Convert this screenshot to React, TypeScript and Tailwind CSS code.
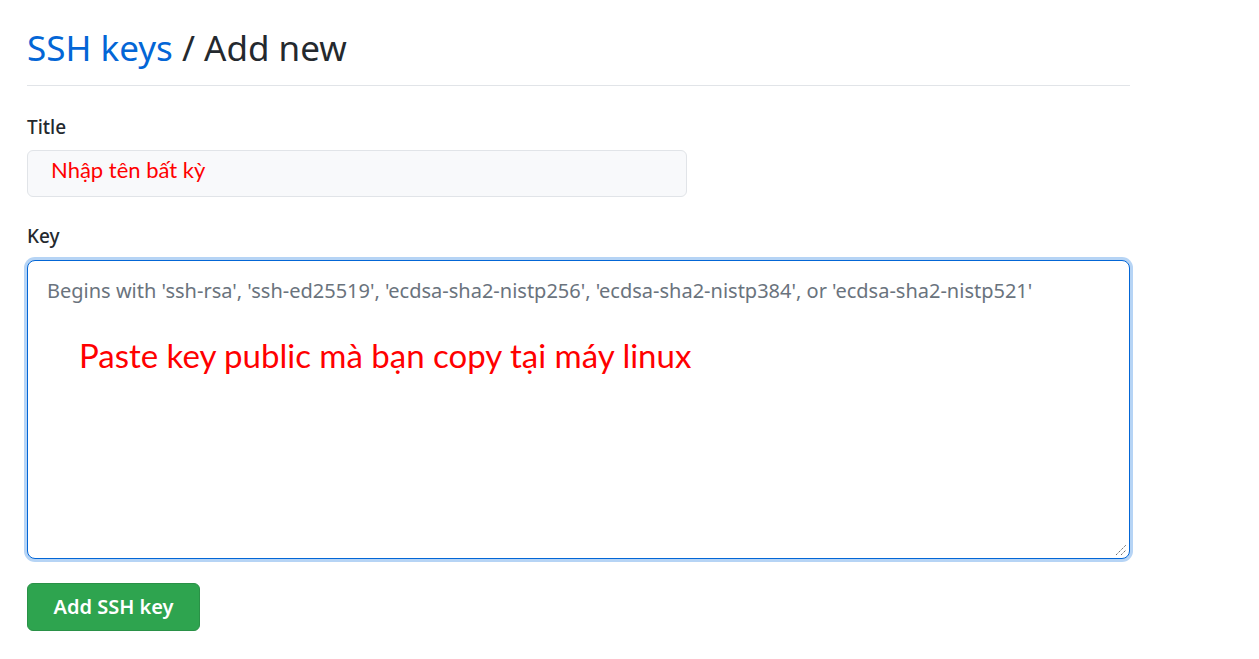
import React from "react";

const App = () => {
  return (
    <div
      className="min-h-screen bg-white pl-[27px] pt-[25px]"
      style={{ fontFamily: '"Noto Sans", "Open Sans", sans-serif' }}
    >
      <div className="w-[1103px]">
        <h2 className="border-b border-[#e1e4e8] pb-[14px] text-[35px] font-normal leading-[46px] text-[#24292e]">
          <a href="#" className="text-[#0366d6]">
            SSH keys
          </a>{" "}
          / Add new
        </h2>

        <form className="mt-[27px]">
          <label className="block text-[19px] font-medium leading-[28px] text-[#24292e]">
            Title
          </label>
          <div className="mt-[9px] flex h-[47px] w-[660px] items-start rounded-[6px] border border-[#e1e4e8] bg-[#f8f9fb] pl-[23px] pt-[5px]">
            <span
              className="text-[22px] leading-[28px] text-[#ff0000]"
              style={{ fontFamily: '"Lato", "Open Sans", sans-serif' }}
            >
              Nhập tên bất kỳ
            </span>
          </div>

          <label className="mt-[25px] block text-[19px] font-medium leading-[28px] text-[#24292e]">
            Key
          </label>
          <div className="relative mt-[10px] h-[299px] w-[1103px] rounded-[8px] border border-[#0366d6] bg-white shadow-[0_0_0_3px_#b6d4f5]">
            <p className="pl-[19px] pt-[16px] text-[20px] leading-[28px] text-[#6a737d]">
              Begins with 'ssh-rsa', 'ssh-ed25519', 'ecdsa-sha2-nistp256',
              'ecdsa-sha2-nistp384', or 'ecdsa-sha2-nistp521'
            </p>
            <p
              className="pl-[51px] pt-[30px] text-[33px] leading-[40px] text-[#ff0000]"
              style={{ fontFamily: '"Lato", "Open Sans", sans-serif' }}
            >
              Paste key public mà bạn copy tại máy linux
            </p>
            <svg
              className="absolute bottom-[2px] right-[2px]"
              width="12"
              height="12"
              viewBox="0 0 12 12"
            >
              <line x1="1" y1="11" x2="11" y2="1" stroke="#555" strokeWidth="1" strokeDasharray="1.2 1" />
              <line x1="6" y1="11" x2="11" y2="6" stroke="#555" strokeWidth="1" strokeDasharray="1.2 1" />
            </svg>
          </div>

          <button
            type="button"
            className="mt-[24px] h-[48px] w-[173px] rounded-[6px] border border-[#2a9147] bg-[#2ea44f] text-[20px] font-semibold text-white"
          >
            Add SSH key
          </button>
        </form>
      </div>
    </div>
  );
};

export default App;
